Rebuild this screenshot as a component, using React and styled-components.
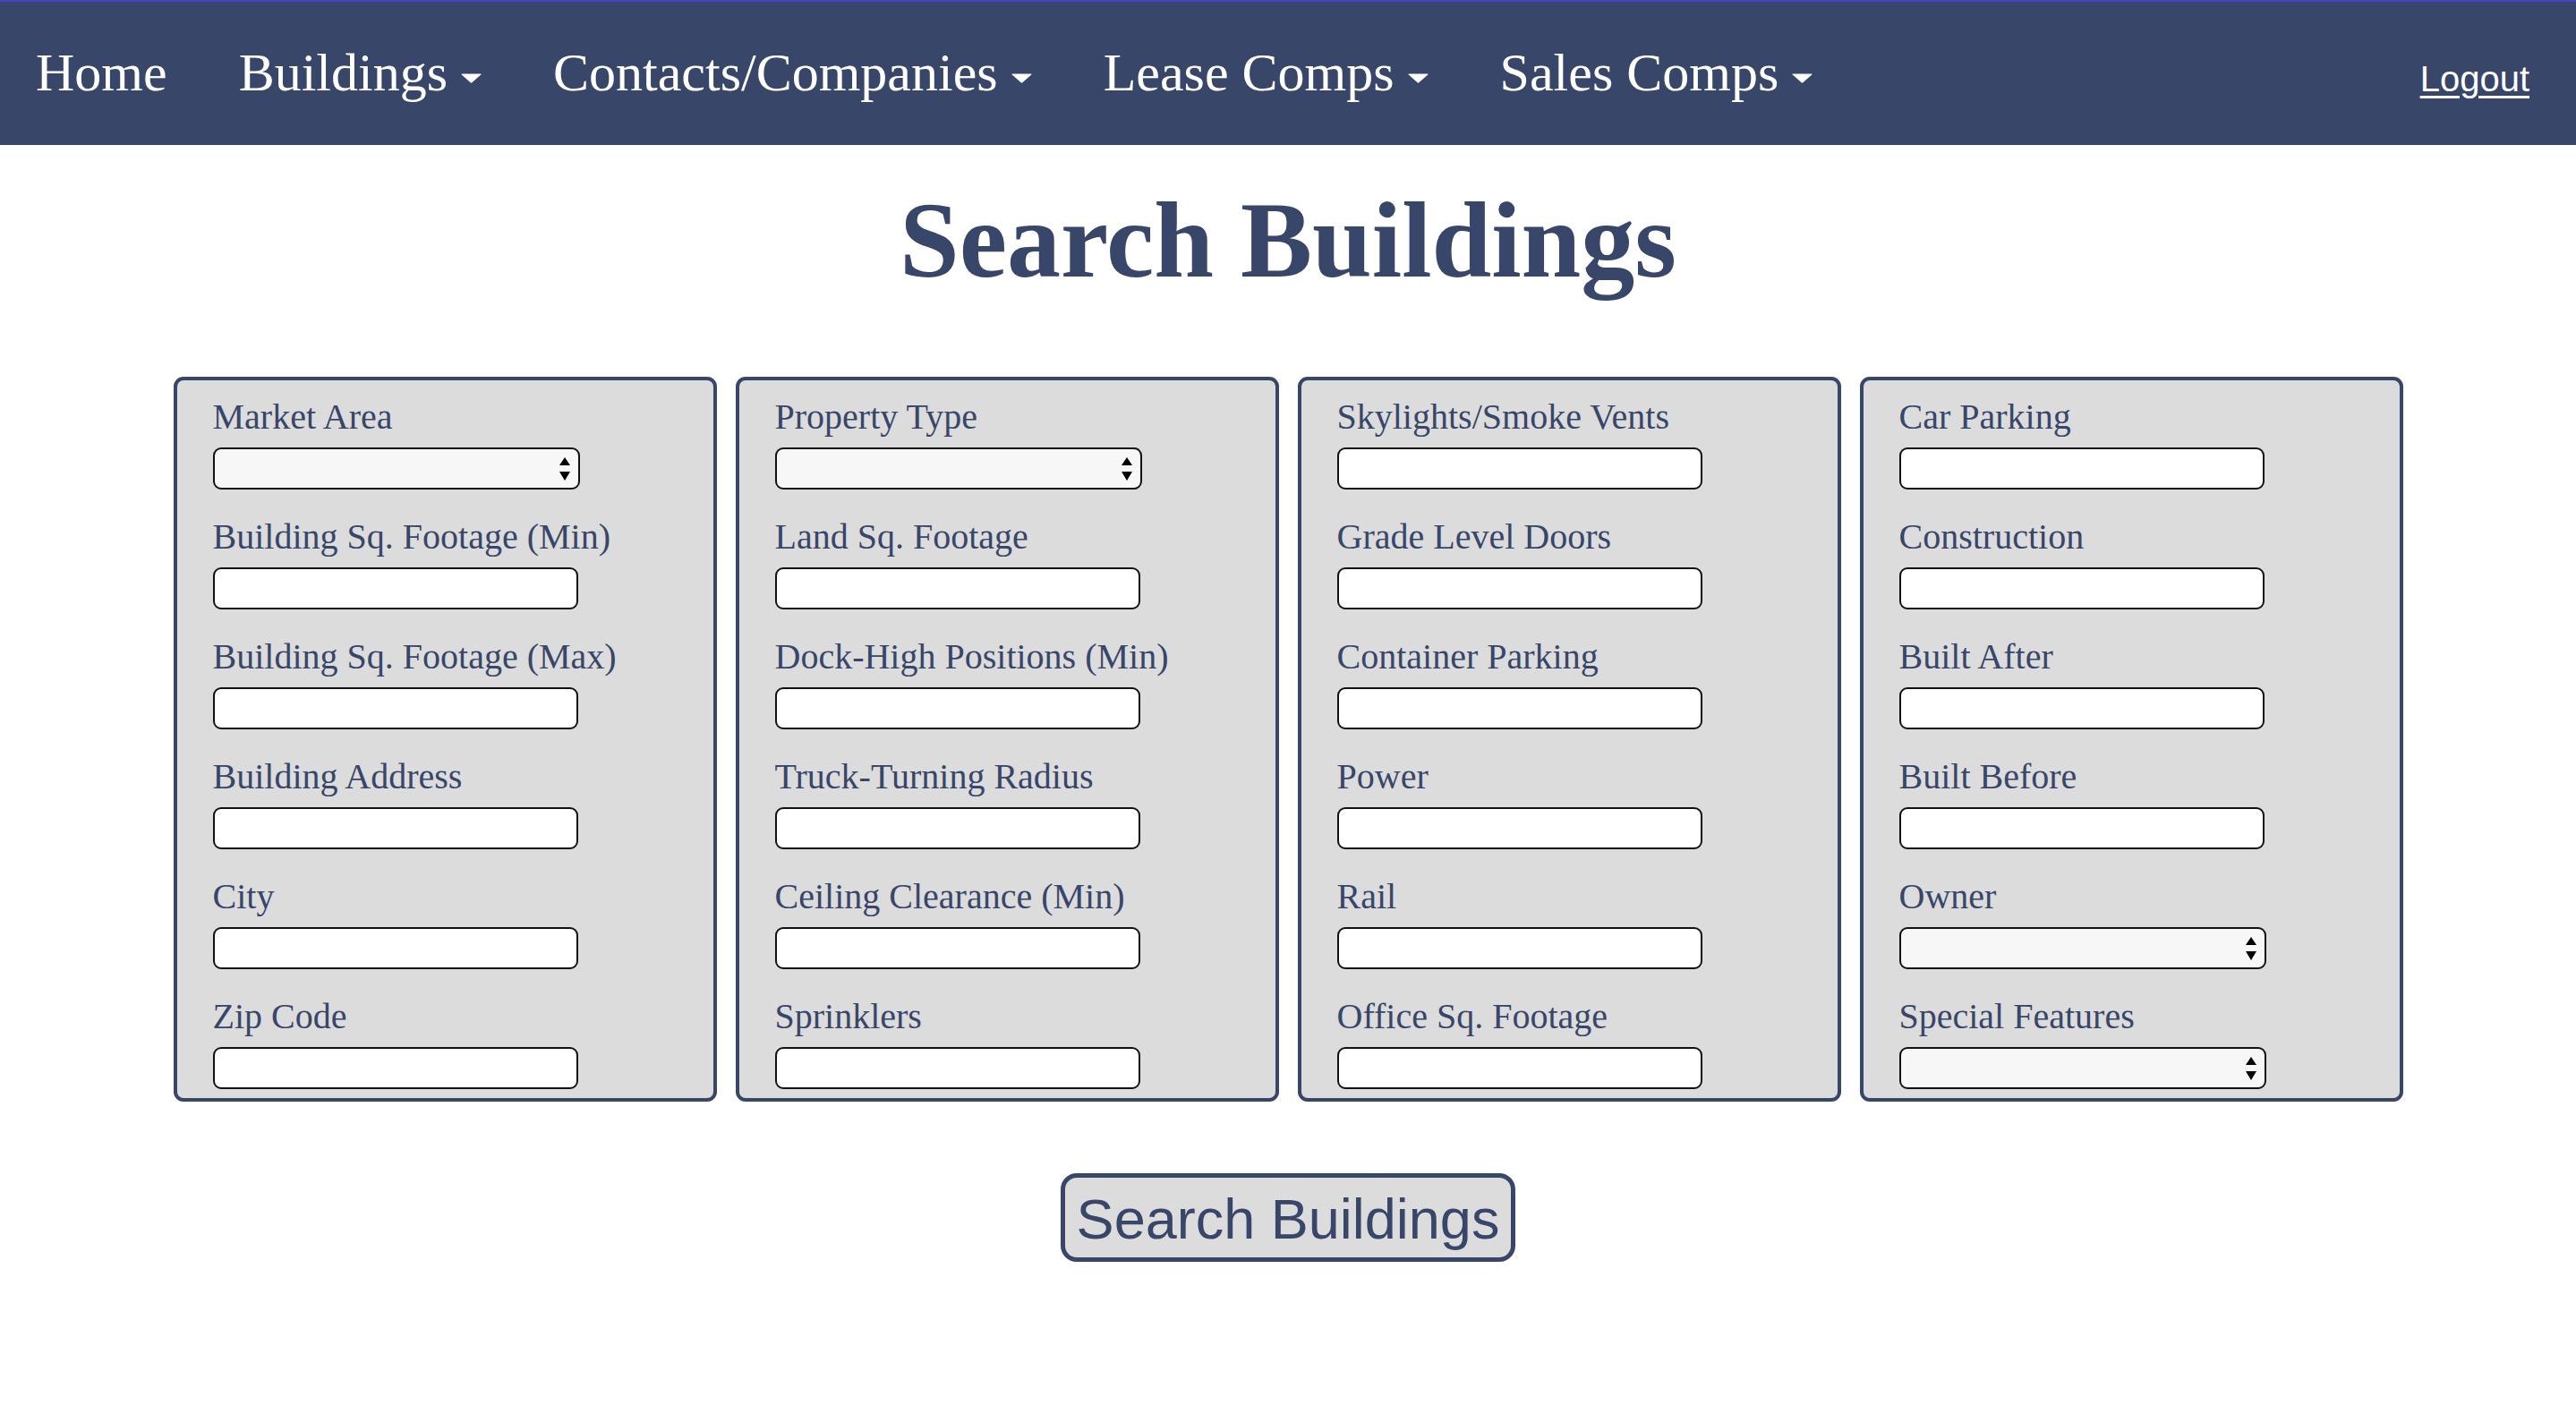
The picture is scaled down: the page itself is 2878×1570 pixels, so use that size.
import React from "react";
import styled, { createGlobalStyle } from "styled-components";

const GlobalStyle = createGlobalStyle`
  html, body { margin: 0; padding: 0; background: #ffffff; }
  body { font-family: "Liberation Serif", "Times New Roman", serif; }
  * { box-sizing: border-box; }
`;

const NAVY = "#38466a";

const Nav = styled.nav`
  display: flex;
  align-items: baseline;
  background: ${NAVY};
  border-top: 2px solid #4a3fc8;
  padding: 45px 52px 46px 0;
`;

const NavList = styled.ul`
  display: flex;
  align-items: baseline;
  list-style: none;
  margin: 0;
  padding: 0;
  flex: 1;
`;

const NavItem = styled.li`
  padding: 0 40px;
  font-family: "Liberation Serif", "Times New Roman", serif;
  font-size: 60px;
  line-height: 69px;
  color: #ffffff;
  white-space: nowrap;
`;

const Caret = styled.svg`
  width: 23px;
  height: 11px;
  margin-left: 15px;
  vertical-align: middle;
`;

const Logout = styled.a`
  font-family: "Liberation Sans", Arial, sans-serif;
  font-size: 40px;
  line-height: 46px;
  color: #ffffff;
  text-decoration: underline;
  text-decoration-thickness: 3px;
  text-underline-offset: 5px;
  position: relative;
  top: 1px;
`;

const Title = styled.h1`
  margin: 38px 0 83px;
  text-align: center;
  font-family: "Liberation Serif", "Times New Roman", serif;
  font-weight: 700;
  font-size: 120px;
  line-height: 138px;
  color: ${NAVY};
`;

const PanelGrid = styled.div`
  display: grid;
  grid-template-columns: repeat(4, 607px);
  justify-content: center;
  column-gap: 21px;
`;

const Panel = styled.fieldset`
  margin: 0;
  min-width: 0;
  background: #dcdcdc;
  border: 4px solid ${NAVY};
  border-radius: 11px;
  padding: 18px 0 10px 40px;
  display: flex;
  flex-direction: column;
  gap: 30px;
`;

const Field = styled.div`
  display: flex;
  flex-direction: column;
  align-items: flex-start;
  gap: 11px;
`;

const Label = styled.label`
  font-family: "Liberation Serif", "Times New Roman", serif;
  font-size: 40px;
  line-height: 46px;
  color: ${NAVY};
  white-space: nowrap;
`;

const TextInput = styled.input`
  width: 408px;
  height: 47px;
  border: 2.5px solid #111111;
  border-radius: 9px;
  background: #ffffff;
  padding: 0 10px;
  font-size: 28px;
  outline: none;
`;

const SelectWrap = styled.div`
  position: relative;
  width: 410px;
  height: 47px;
`;

const Select = styled.select`
  appearance: none;
  -webkit-appearance: none;
  width: 100%;
  height: 100%;
  border: 2.5px solid #111111;
  border-radius: 9px;
  background: #f7f7f7;
  padding: 0 10px;
  font-size: 28px;
  outline: none;
`;

const SelectArrows = styled.svg`
  position: absolute;
  right: 11px;
  top: 11px;
  width: 12px;
  height: 26px;
  pointer-events: none;
`;

const ButtonRow = styled.div`
  display: flex;
  justify-content: center;
  padding: 80px 0 120px;
`;

const SearchButton = styled.button`
  font-family: "Liberation Sans", Arial, sans-serif;
  font-size: 63px;
  line-height: 74px;
  color: ${NAVY};
  background: #dcdcdc;
  border: 5px solid ${NAVY};
  border-radius: 18px;
  padding: 9px 13px 6px;
  cursor: pointer;
`;

const columns = [
  [
    { label: "Market Area", select: true },
    { label: "Building Sq. Footage (Min)" },
    { label: "Building Sq. Footage (Max)" },
    { label: "Building Address" },
    { label: "City" },
    { label: "Zip Code" },
  ],
  [
    { label: "Property Type", select: true },
    { label: "Land Sq. Footage" },
    { label: "Dock-High Positions (Min)" },
    { label: "Truck-Turning Radius" },
    { label: "Ceiling Clearance (Min)" },
    { label: "Sprinklers" },
  ],
  [
    { label: "Skylights/Smoke Vents" },
    { label: "Grade Level Doors" },
    { label: "Container Parking" },
    { label: "Power" },
    { label: "Rail" },
    { label: "Office Sq. Footage" },
  ],
  [
    { label: "Car Parking" },
    { label: "Construction" },
    { label: "Built After" },
    { label: "Built Before" },
    { label: "Owner", select: true },
    { label: "Special Features", select: true },
  ],
];

const navItems = [
  { label: "Home" },
  { label: "Buildings", menu: true },
  { label: "Contacts/Companies", menu: true },
  { label: "Lease Comps", menu: true },
  { label: "Sales Comps", menu: true },
];

function DownCaret() {
  return (
    <Caret viewBox="0 0 23 11">
      <path d="M1 0.5 L22 0.5 Q22.8 0.6 22.2 1.4 L12.3 10.3 Q11.5 11 10.7 10.3 L0.8 1.4 Q0.2 0.6 1 0.5 Z" fill="#ffffff" />
    </Caret>
  );
}

function FieldControl({ id, select }) {
  if (select) {
    return (
      <SelectWrap>
        <Select id={id}>
          <option value=""></option>
        </Select>
        <SelectArrows viewBox="0 0 12 26">
          <path d="M6 0 L12 9 L0 9 Z" fill="#000000" />
          <path d="M0 16 L12 16 L6 26 Z" fill="#000000" />
        </SelectArrows>
      </SelectWrap>
    );
  }
  return <TextInput id={id} type="text" />;
}

export default function App() {
  return (
    <>
      <GlobalStyle />
      <Nav>
        <NavList>
          {navItems.map((item) => (
            <NavItem key={item.label}>
              {item.label}
              {item.menu && <DownCaret />}
            </NavItem>
          ))}
        </NavList>
        <Logout href="#">Logout</Logout>
      </Nav>
      <main>
        <Title>Search Buildings</Title>
        <form onSubmit={(e) => e.preventDefault()}>
          <PanelGrid>
            {columns.map((fields, ci) => (
              <Panel key={ci}>
                {fields.map((f, fi) => {
                  const id = `f-${ci}-${fi}`;
                  return (
                    <Field key={f.label}>
                      <Label htmlFor={id}>{f.label}</Label>
                      <FieldControl id={id} select={f.select} />
                    </Field>
                  );
                })}
              </Panel>
            ))}
          </PanelGrid>
          <ButtonRow>
            <SearchButton type="submit">Search Buildings</SearchButton>
          </ButtonRow>
        </form>
      </main>
    </>
  );
}
